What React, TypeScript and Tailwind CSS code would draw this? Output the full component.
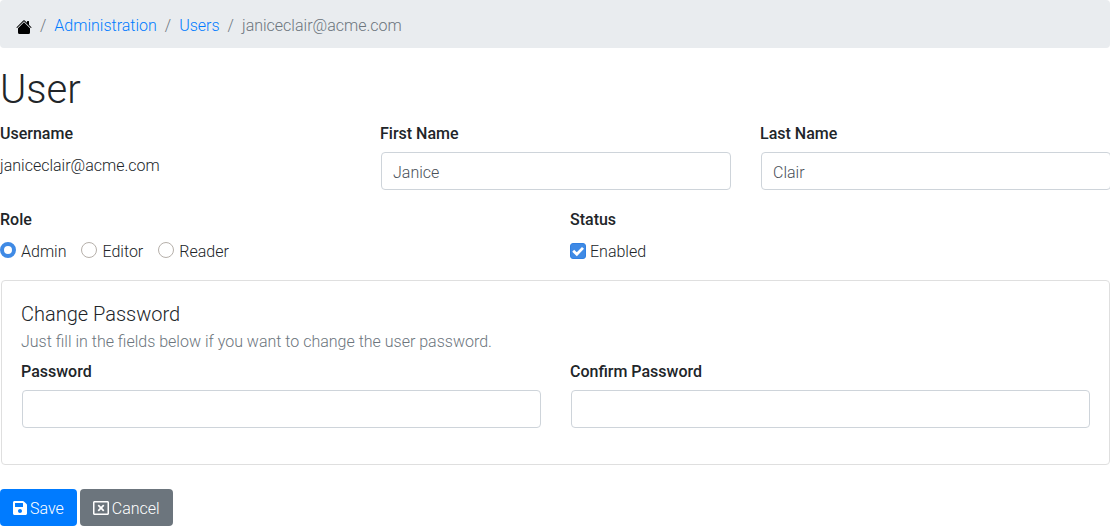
import type { InputHTMLAttributes, ReactNode } from "react";
import { BsHouseFill } from "react-icons/bs";
import { FaRegWindowClose, FaSave } from "react-icons/fa";

const labelClass = "block mb-1.5 font-medium";

function TextField({ label, id, ...rest }: { label: string; id: string } & InputHTMLAttributes<HTMLInputElement>) {
  return (
    <div className="mb-[18px]">
      <label htmlFor={id} className={labelClass}>{label}</label>
      <input
        id={id}
        className="ml-px block h-[38px] w-full rounded border border-[#ced4da] bg-white px-[11px] pt-0.5 text-[#495057] outline-none focus:border-[#80bdff]"
        {...rest}
      />
    </div>
  );
}

function RoleOption({ value, checked }: { value: string; checked?: boolean }) {
  return (
    <label className="flex items-center gap-[5px]">
      <input
        type="radio"
        name="role"
        value={value}
        defaultChecked={checked}
        className="-mt-1 size-4 appearance-none rounded-full border border-[#b6b0aa] bg-white checked:border-4 checked:border-[#3f8ae5]"
      />
      {value}
    </label>
  );
}

function Crumb({ children }: { children: ReactNode }) {
  return (
    <li className="flex gap-2">
      <span className="text-[#6c757d]">/</span>
      {children}
    </li>
  );
}

export default function App() {
  return (
    <div className="overflow-x-hidden bg-white font-['Roboto',sans-serif] text-base leading-6 font-light text-[#212529]">
      <nav aria-label="Breadcrumb" className="mb-4 rounded bg-[#e9ecef] px-4 pt-3.5 pb-2.5">
        <ol className="flex flex-wrap gap-2">
          <li className="flex items-center pt-px">
            <a href="#home" aria-label="Home" className="text-black"><BsHouseFill size={16} /></a>
          </li>
          <Crumb><a href="#administration" className="text-[#007bff]">Administration</a></Crumb>
          <Crumb><a href="#users" className="text-[#007bff]">Users</a></Crumb>
          <Crumb><span aria-current="page" className="text-[#6c757d]">janiceclair@acme.com</span></Crumb>
        </ol>
      </nav>

      <h1 className="mb-2 pt-0.5 text-[40px] leading-[48px] font-light">User</h1>

      <form onSubmit={(e) => e.preventDefault()}>
        <div className="grid grid-cols-3 gap-x-[30px]">
          <div>
            <div className={labelClass}>Username</div>
            <div className="pt-0.5">janiceclair@acme.com</div>
          </div>
          <TextField label="First Name" id="first-name" defaultValue="Janice" />
          <TextField label="Last Name" id="last-name" defaultValue="Clair" />
        </div>

        <div className="mb-4 grid grid-cols-2 gap-x-[30px]">
          <fieldset>
            <legend className={labelClass}>Role</legend>
            <div className="flex gap-[15px] pt-0.5">
              <RoleOption value="Admin" checked />
              <RoleOption value="Editor" />
              <RoleOption value="Reader" />
            </div>
          </fieldset>
          <fieldset>
            <legend className={labelClass}>Status</legend>
            <label className="flex items-center gap-1 pt-0.5">
              <span className="-mt-0.5 grid size-4 place-items-center">
                <input
                  type="checkbox"
                  defaultChecked
                  className="peer col-start-1 row-start-1 size-4 appearance-none rounded-[3px] border border-[#b6b0aa] bg-white checked:border-[#3080e2] checked:bg-[#3f8ae5]"
                />
                <svg viewBox="0 0 16 16" aria-hidden="true" className="pointer-events-none invisible col-start-1 row-start-1 size-4 peer-checked:visible">
                  <path d="M3.2 7.8 6.8 11.3 13 4.9" fill="none" stroke="white" strokeWidth="2.8" />
                </svg>
              </span>
              Enabled
            </label>
          </fieldset>
        </div>

        <section className="mb-6 ml-px rounded border border-[#dfdfdf] px-5 pt-5 pb-[18px] pl-[19px]">
          <h2 className="mb-[3px] text-xl leading-[26px]">Change Password</h2>
          <p className="mb-1.5 text-[#6c757d]">Just fill in the fields below if you want to change the user password.</p>
          <div className="grid grid-cols-2 gap-x-[30px]">
            <TextField label="Password" id="password" type="password" />
            <TextField label="Confirm Password" id="confirm-password" type="password" />
          </div>
        </section>

        <div className="flex gap-[3px]">
          <button type="submit" className="flex h-[37px] items-center gap-[3px] rounded bg-[#007bff] px-[13px] text-white">
            <FaSave className="h-4 w-[14px]" />
            <span className="pt-0.5">Save</span>
          </button>
          <button type="button" className="flex h-[37px] items-center gap-[3px] rounded bg-[#6c757d] px-[13px] text-white">
            <FaRegWindowClose size={16} />
            <span className="pt-0.5">Cancel</span>
          </button>
        </div>
      </form>
    </div>
  );
}
